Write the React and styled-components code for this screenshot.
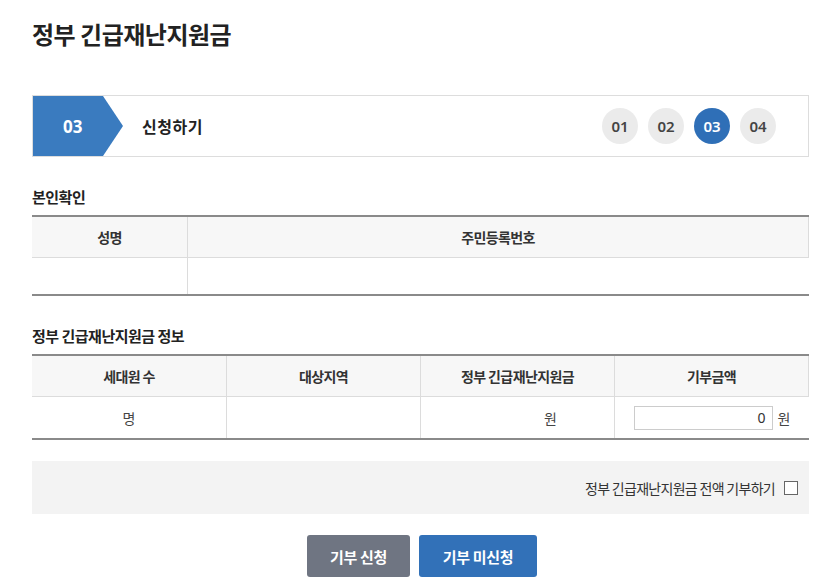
import React from "react";
import styled, { createGlobalStyle } from "styled-components";

const Global = createGlobalStyle`
  html, body { margin: 0; padding: 0; background: #fff; }
  body { font-family: "Noto Sans CJK KR", "Noto Sans", sans-serif; color: #222; }
  * { box-sizing: border-box; }
`;

const Page = styled.div`
  width: 777px;
  margin-left: 32px;
  padding-top: 16px;
`;

const Title = styled.h1`
  margin: 0;
  font-size: 24px;
  font-weight: 700;
  letter-spacing: -0.5px;
  line-height: 36px;
  color: #222;
`;

const StepBar = styled.div`
  margin-top: 43px;
  height: 62px;
  border: 1px solid #ddd;
  display: flex;
  align-items: center;
`;

const StepTag = styled.div`
  width: 90px;
  height: 60px;
  background: #3a7bbf;
  clip-path: polygon(0 0, 70px 0, 90px 50%, 70px 100%, 0 100%);
  color: #fff;
  font-size: 17px;
  font-weight: 700;
  display: flex;
  align-items: center;
  padding-left: 30px;
  font-family: "Noto Sans", sans-serif;
`;

const StepLabel = styled.div`
  margin-left: 19px;
  font-size: 16px;
  font-weight: 700;
  letter-spacing: 0.5px;
  color: #222;
  flex: 1;
`;

const Dots = styled.div`
  display: flex;
  gap: 10px;
  margin-right: 32px;
`;

const Dot = styled.div`
  width: 36px;
  height: 36px;
  border-radius: 50%;
  background: ${(p) => (p.$active ? "#2f6fb7" : "#ebebeb")};
  color: ${(p) => (p.$active ? "#fff" : "#444")};
  font-family: "Noto Sans", sans-serif;
  font-size: 15px;
  font-weight: 600;
  display: flex;
  align-items: center;
  justify-content: center;
`;

const SectionTitle = styled.h2`
  margin: ${(p) => p.$mt} 0 8px;
  font-size: 15px;
  font-weight: 700;
  letter-spacing: -0.5px;
  line-height: 20px;
  color: #222;
`;

const Table = styled.div`
  display: grid;
  grid-template-columns: ${(p) => p.$cols};
  border-top: 2px solid #8a8a8a;
  border-bottom: 2px solid #8a8a8a;
`;

const Th = styled.div`
  height: 41px;
  background: #f7f7f7;
  border-bottom: 1px solid #dcdcdc;
  border-left: ${(p) => (p.$first ? "none" : "1px solid #dcdcdc")};
  border-right: ${(p) => (p.$last ? "1px solid #dcdcdc" : "none")};
  display: flex;
  align-items: center;
  justify-content: center;
  font-size: 14px;
  font-weight: 700;
  color: #333;
  letter-spacing: -0.6px;
`;

const Td = styled.div`
  height: ${(p) => p.$h || "36px"};
  border-left: ${(p) => (p.$first ? "none" : "1px solid #dcdcdc")};
  display: flex;
  align-items: center;
  justify-content: ${(p) => p.$justify || "center"};
  padding: 0 ${(p) => p.$pr || "0px"} 0 0;
  font-size: 14px;
  color: #444;
`;

const AmountInput = styled.input`
  width: 139px;
  height: 24px;
  border: 1px solid #ccc;
  text-align: right;
  padding: 0 6px;
  font-family: "Noto Sans", sans-serif;
  font-size: 14px;
  color: #333;
  outline: none;
`;

const Unit = styled.span`
  margin-left: 5px;
  font-size: 14px;
  color: #444;
`;

const AllBox = styled.div`
  margin-top: 21px;
  height: 53px;
  background: #f3f3f3;
  display: flex;
  align-items: center;
  justify-content: flex-end;
  padding-right: 11px;
  font-size: 14px;
  color: #333;
  letter-spacing: -0.7px;
`;

const Check = styled.span`
  display: inline-block;
  width: 14px;
  height: 14px;
  border: 1px solid #666;
  background: #fff;
  margin-left: 9px;
`;

const Buttons = styled.div`
  margin-top: 21px;
  display: flex;
  justify-content: center;
  gap: 9px;
  padding-left: 3px;
`;

const Btn = styled.button`
  height: 42px;
  padding: 0 20px;
  border: none;
  border-radius: 3px;
  background: ${(p) => (p.$primary ? "#3271b8" : "#6f7582")};
  color: #fff;
  font-family: "Noto Sans CJK KR", sans-serif;
  font-size: 15px;
  font-weight: 700;
  letter-spacing: -0.3px;
  min-width: ${(p) => p.$w};
`;

export default function App() {
  return (
    <>
      <Global />
      <Page>
        <Title>정부 긴급재난지원금</Title>
        <StepBar>
          <StepTag>03</StepTag>
          <StepLabel>신청하기</StepLabel>
          <Dots>
            <Dot>01</Dot>
            <Dot>02</Dot>
            <Dot $active>03</Dot>
            <Dot>04</Dot>
          </Dots>
        </StepBar>

        <SectionTitle $mt="30px">본인확인</SectionTitle>
        <Table $cols="155px 1fr">
          <Th $first>성명</Th>
          <Th $last>주민등록번호</Th>
          <Td $first />
          <Td />
        </Table>

        <SectionTitle $mt="30px">정부 긴급재난지원금 정보</SectionTitle>
        <Table $cols="194px 194px 194px 1fr">
          <Th $first>세대원 수</Th>
          <Th>대상지역</Th>
          <Th>정부 긴급재난지원금</Th>
          <Th $last>기부금액</Th>
          <Td $first $h="41px">명</Td>
          <Td $h="41px" />
          <Td $h="41px" $justify="flex-end" $pr="57px">원</Td>
          <Td $h="41px">
            <AmountInput defaultValue="0" />
            <Unit>원</Unit>
          </Td>
        </Table>

        <AllBox>
          정부 긴급재난지원금 전액 기부하기
          <Check />
        </AllBox>

        <Buttons>
          <Btn $w="103px">기부 신청</Btn>
          <Btn $primary $w="118px">기부 미신청</Btn>
        </Buttons>
      </Page>
    </>
  );
}
